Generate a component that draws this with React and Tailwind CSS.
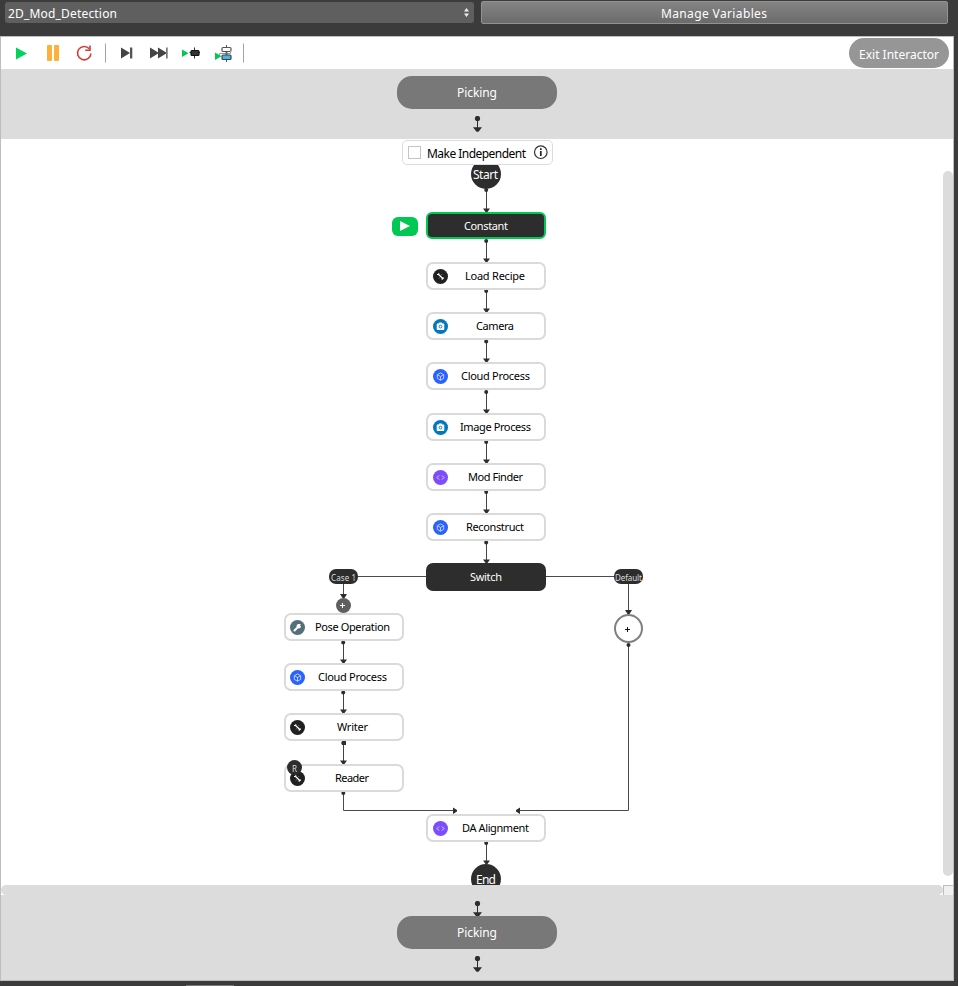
import React from "react";

const ORIGIN_X = 1;
const ORIGIN_Y = 139;

const at = (x, y) => ({ left: x - ORIGIN_X, top: y - ORIGIN_Y });

const NODES = [
  { label: "Load Recipe", icon: "tool", x: 426, y: 262, w: 60 },
  { label: "Camera", icon: "camera", x: 426, y: 312, w: 38 },
  { label: "Cloud Process", icon: "cube", x: 426, y: 362, w: 69 },
  { label: "Image Process", icon: "camera", x: 426, y: 413, w: 71 },
  { label: "Mod Finder", icon: "code", x: 426, y: 463, w: 55 },
  { label: "Reconstruct", icon: "cube", x: 426, y: 513, w: 58 },
  { label: "Pose Operation", icon: "wrench", x: 284, y: 613, w: 75 },
  { label: "Cloud Process", icon: "cube", x: 284, y: 663, w: 69 },
  { label: "Writer", icon: "tool", x: 284, y: 713, w: 31 },
  { label: "Reader", icon: "tool", x: 284, y: 764, w: 34 },
  { label: "DA Alignment", icon: "code", x: 426, y: 814, w: 67 },
];

const EDGES = [
  [486, 190, 212],
  [486, 241, 262],
  [486, 291, 312],
  [486, 341.5, 362],
  [486, 392, 413],
  [486, 442, 463],
  [486, 492, 513],
  [486, 542.5, 563],
  [343, 642.5, 663],
  [343, 692.5, 713],
  [343, 743, 764],
  [486, 843, 864],
];

const ICON_BG = {
  tool: "#202020",
  camera: "#0277bd",
  cube: "#2962ff",
  code: "#7c4dff",
  wrench: "#546e7a",
};

function NodeIcon({ kind }) {
  return (
    <svg className="size-[15px] shrink-0" viewBox="0 0 15 15" fill="none">
      <circle cx="7.5" cy="7.5" r="7.5" fill={ICON_BG[kind]} />
      {kind === "tool" && (
        <g>
          <path d="M4 5.500h1.700V4.200M5.600 5.500 9.300 9M9.200 10.700V9.100h1.800" stroke="#fff" strokeWidth="1.200" />
          <path d="M7.900 6.300 9 5.200M6.800 8.500 5.700 9.600" stroke="#8c8c8c" strokeWidth=".9" />
        </g>
      )}
      {kind === "camera" && (
        <>
          <path d="M4.600 4.600h1l.6-1h2.600l.6 1h1q.9 0 .9.900v4.600q0 .9-.9.900H4.600q-.9 0-.9-.9V5.500q0-.9.9-.9z" fill="#fff" />
          <circle cx="7.500" cy="7.600" r="1.400" stroke="#0277bd" strokeWidth=".9" />
        </>
      )}
      {kind === "cube" && (
        <path d="M7.500 3.900l3.200 1.800v3.700l-3.200 1.800-3.200-1.800V5.700zM4.300 5.700l3.200 1.800 3.200-1.800M7.500 7.500v3.700" stroke="#c9d6ff" strokeWidth=".9" strokeLinejoin="round" />
      )}
      {kind === "code" && (
        <path d="M6 5.500 4 7.500 6 9.500M9 5.500l2 2L9 9.500" stroke="#e4d9ff" strokeWidth="1" />
      )}
      {kind === "wrench" && (
        <>
          <path d="M4.500 10.500 8 7" stroke="#fff" strokeWidth="2" strokeLinecap="round" />
          <path d="M6.400 6.300q.1-2.300 2.500-2.300l2.100.1-1.200 1.500 1.100.4q.1 2.500-2.300 2.600z" fill="#fff" />
        </>
      )}
    </svg>
  );
}

function Label({ children, width, size = 11, fill = "#000" }) {
  return (
    <svg className="block overflow-visible" width={width} height="16" style={{ fontSize: size }}>
      <text x="0" y="12" textLength={width} lengthAdjust="spacing" fill={fill}>
        {children}
      </text>
    </svg>
  );
}

function FlowNode({ node }) {
  const inBranch = node.x < 400;
  return (
    <div
      className={
        inBranch
          ? "absolute flex h-7 w-[119.5px] items-center rounded-[7px] border-2 border-[#dadada] bg-white pl-1"
          : "absolute flex h-7 w-[120px] items-center rounded-[7px] border-2 border-[#dadada] bg-white pl-[5px]"
      }
      style={at(node.x, node.y)}
    >
      <NodeIcon kind={node.icon} />
      <div className="flex flex-1 justify-center pr-0.5">
        <Label width={node.w}>{node.label}</Label>
      </div>
    </div>
  );
}

function Edge({ x, from, to }) {
  return (
    <g fill="#2d2d2d">
      <path d={`M${x + 0.5} ${from}V${to}`} stroke="#444" strokeWidth="1" />
      <circle cx={x + 0.2} cy={from} r="2" />
      <path d={`M${x - 3} ${to - 3.5}h7l-2.500 3.500h-2z`} />
    </g>
  );
}

function Edges() {
  return (
    <svg className="absolute inset-0" width="952" height="746" viewBox="1 139 952 746">
      {EDGES.map(([x, from, to]) => (
        <Edge key={`${x}-${from}`} x={x} from={from} to={to} />
      ))}
      <rect x="342" y="741" width="4" height="4" fill="#2d2d2d" />
      <g stroke="#4a4a4a" strokeWidth="1" fill="none">
        <path d="M358 576.500H426M546 576.500H614" />
        <path d="M343.500 584V597M628.500 584V612" />
        <path d="M343.500 792V810.500H454" />
        <path d="M628.500 646V810.500H519" />
      </g>
      <g fill="#2d2d2d">
        <path d="M340 594h7l-2.500 4h-2zM625 610h7l-2.500 4h-2z" />
        <circle cx="343.300" cy="793" r="2" />
        <circle cx="628.500" cy="645" r="2" />
        <path d="M453 807.500v6.500l4-2.500v-1.500zM520 807.500v6.500l-4-2.500v-1.500z" />
      </g>
    </svg>
  );
}

function DownArrow() {
  return (
    <svg className="block h-4 w-[9px]" viewBox="0 0 9 16" fill="#2d2d2d">
      <circle cx="4.500" cy="2.500" r="2.600" />
      <path d="M4 3h1v9H4zM0 11.300h9L5.500 15.700h-2z" />
    </svg>
  );
}

function Picking() {
  return (
    <div className="flex h-[33px] w-40 items-center justify-center rounded-[15px] bg-[#787878]">
      <div className="pt-px">
        <Label width={40} size={12} fill="#fff">Picking</Label>
      </div>
    </div>
  );
}

function ToolIcons() {
  return (
    <div className="flex h-full items-center pl-[14px]">
      <svg className="h-8 w-[244px]" viewBox="15 37 244 32" fill="none">
        <path d="M16 47.500v12l11-6z" fill="#00d45a" />
        <rect x="47" y="45" width="5" height="16" rx="1" fill="#ffb03b" />
        <rect x="54" y="45" width="5" height="16" rx="1" fill="#ffb03b" />
        <path d="M89.300 48.800A6.700 6.700 0 1 0 90.900 53.500" stroke="#d43b3b" strokeWidth="1.600" />
        <path d="M90 45.500v4.800h-4.800" stroke="#d43b3b" strokeWidth="1.600" />
        <path d="M105.500 43.500v19M243.500 43.500v19" stroke="#a3a3a3" />
        <path d="M121 47.500v11l9-5.500z" fill="#444" />
        <path d="M130 47.500h2.300v11H130z" fill="#555" />
        <path d="M150 47.500v11l9-5.500zM158 47.500v11l9-5.500z" fill="#444" />
        <path d="M166 47.500h1.700v11H166z" fill="#777" />
        <path d="M182 49.500v7.500l6.500-3.700z" fill="#00c853" />
        <path d="M189.500 52.500h10.500M194.500 47.500v11" stroke="#333" />
        <rect x="191" y="50.500" width="8" height="5" rx="1" fill="#333" stroke="#111" strokeWidth="1.200" />
        <path d="M226.500 45v17" stroke="#555" />
        <rect x="222" y="47.500" width="9" height="4" rx="1" fill="#fff" stroke="#555" strokeWidth="1.200" />
        <path d="M219.500 57v-3.500h11v-3" stroke="#999" />
        <path d="M225 52.500h3v2h-3z" fill="#777" />
        <rect x="222" y="55" width="9" height="4.500" rx="1" fill="#43b5f3" stroke="#444" strokeWidth="1.200" />
        <path d="M215 52.500v7.500l6.500-3.700z" fill="#00c853" />
      </svg>
    </div>
  );
}

function TopBar() {
  return (
    <div className="flex h-9 items-start bg-[#3b3b3b] pl-[5px]">
      <div className="mt-0.5 flex h-[21px] w-[469px] items-center justify-between rounded-[3px] bg-[#5f5f5f] pl-[3px] pr-[5px]">
        <div className="pt-0.5">
          <Label width={109} size={12} fill="#fff">2D_Mod_Detection</Label>
        </div>
        <svg className="h-[9px] w-[5px]" viewBox="0 0 5 9" fill="#eee">
          <path d="M0 3.500 2.500 0 5 3.500zM0 5.500h5L2.500 9z" />
        </svg>
      </div>
      <div className="ml-[7px] mt-px flex h-[23px] w-[467px] items-center justify-center rounded-[2px] border border-[#929292] bg-linear-to-b from-[#848484] to-[#6b6b6b]">
        <div className="pr-0.5 pt-0.5">
          <Label width={106} size={12} fill="#fff">Manage Variables</Label>
        </div>
      </div>
    </div>
  );
}

function Canvas() {
  return (
    <div className="relative h-[746px] shrink-0 overflow-hidden bg-white">
      <Edges />
      <div className="absolute flex size-[30px] items-center justify-center rounded-full bg-[#2d2d2d]" style={at(471, 159)}>
        <div className="pr-px pt-0.5">
          <Label width={25} size={12} fill="#fff">Start</Label>
        </div>
      </div>
      <div
        className="absolute flex h-[25px] w-[151px] items-center rounded-[5px] border border-[#dcdcdc] bg-white pl-[5px]"
        style={at(402, 140)}
      >
        <span className="size-[13px] border border-[#c4c4c4] bg-white" />
        <div className="ml-1.5 pt-0.5">
          <Label width={99} size={12}>Make Independent</Label>
        </div>
        <svg className="ml-[7px] size-[15px]" viewBox="0 0 15 15" fill="none">
          <circle cx="7.800" cy="7.200" r="6.300" stroke="#333" strokeWidth="1.200" />
          <path d="M7.800 3.300v1.700M7.800 6v5" stroke="#222" strokeWidth="1.700" />
        </svg>
      </div>
      <div className="absolute flex h-[19px] w-[26px] items-center justify-center rounded-[6px] bg-[#00c853]" style={at(392, 217)}>
        <svg className="mb-px h-[10px] w-[10px]" viewBox="0 0 10 10" fill="#fff">
          <path d="M0 0v10l10-5z" />
        </svg>
      </div>
      <div
        className="absolute flex h-[27px] w-[120px] items-center justify-center rounded-[6px] border-2 border-[#00c853] bg-[#2d2d2d]"
        style={at(426, 212)}
      >
        <div className="pt-px">
          <Label width={44} fill="#fff">Constant</Label>
        </div>
      </div>
      {NODES.map((node) => (
        <FlowNode key={node.y} node={node} />
      ))}
      <div className="absolute flex h-7 w-[120px] items-center justify-center rounded-[7px] bg-[#2d2d2d]" style={at(426, 563)}>
        <Label width={32} fill="#fff">Switch</Label>
      </div>
      <div className="absolute flex h-[15px] w-[29px] items-center justify-center rounded-[7px] bg-[#2d2d2d]" style={at(329, 569)}>
        <Label width={25} size={8} fill="#ddd">Case 1</Label>
      </div>
      <div className="absolute flex h-[15px] w-[29px] items-center justify-center rounded-[7px] bg-[#2d2d2d]" style={at(614, 569)}>
        <Label width={27} size={8} fill="#ddd">Default</Label>
      </div>
      <div className="absolute flex size-[15px] items-center justify-center rounded-full bg-[#5f5f5f]" style={at(336, 597.500)}>
        <svg className="mr-0.5 mt-px size-[5px]" viewBox="0 0 5 5">
          <path d="M0 2.500h5M2.500 0v5" stroke="#fff" />
        </svg>
      </div>
      <div className="absolute flex size-[29px] items-center justify-center rounded-full border-2 border-[#808080] bg-white" style={at(614, 614)}>
        <svg className="mr-0.5 mt-0.5 size-[5px]" viewBox="0 0 5 5">
          <path d="M0 2.500h5M2.500 0v5" stroke="#111" />
        </svg>
      </div>
      <div className="absolute flex size-[15px] items-center justify-center rounded-full bg-[#2d2d2d]" style={at(287, 760)}>
        <Label width={5} size={8} fill="#ddd">R</Label>
      </div>
      <div className="absolute flex size-[30px] items-center justify-center rounded-full bg-[#2d2d2d]" style={at(471, 864)}>
        <div className="pt-0.5">
          <Label width={20} size={12} fill="#fff">End</Label>
        </div>
      </div>
      <div className="absolute h-[705px] w-[10px] rounded-full bg-[#dcdcdc]" style={at(943, 171)} />
    </div>
  );
}

export default function App() {
  return (
    <div className="flex h-[986px] w-[958px] flex-col overflow-hidden bg-[#3b3b3b] font-['Noto_Sans','Open_Sans',sans-serif]">
      <TopBar />
      <div className="flex h-[945px] w-[954px] flex-col border border-[#bdbdbd] bg-white">
        <div className="flex h-8 shrink-0 items-center justify-between bg-white pr-1">
          <ToolIcons />
          <div className="flex h-[30px] w-[100px] items-center justify-center rounded-full bg-[#969696]">
            <div className="pt-1">
              <Label width={80} size={12} fill="#fff">Exit Interactor</Label>
            </div>
          </div>
        </div>
        <div className="flex h-[70px] shrink-0 flex-col items-center bg-[#dcdcdc] pt-[7px]">
          <Picking />
          <div className="mt-[7px]">
            <DownArrow />
          </div>
        </div>
        <Canvas />
        <div className="flex h-[10px] shrink-0 bg-white">
          <div className="h-[10px] w-[942px] rounded-full bg-[#dcdcdc]" />
          <div className="h-[10px] w-[10px] border-l border-t border-[#bdbdbd] bg-[#f0f0f0]" />
        </div>
        <div className="flex h-[85px] shrink-0 flex-col items-center bg-[#dcdcdc] pt-[6px]">
          <DownArrow />
          <div className="-mt-px">
            <Picking />
          </div>
          <div className="mt-[7px]">
            <DownArrow />
          </div>
        </div>
      </div>
      <div className="mt-1 ml-[186px] h-px w-12 bg-[#777]" />
    </div>
  );
}
